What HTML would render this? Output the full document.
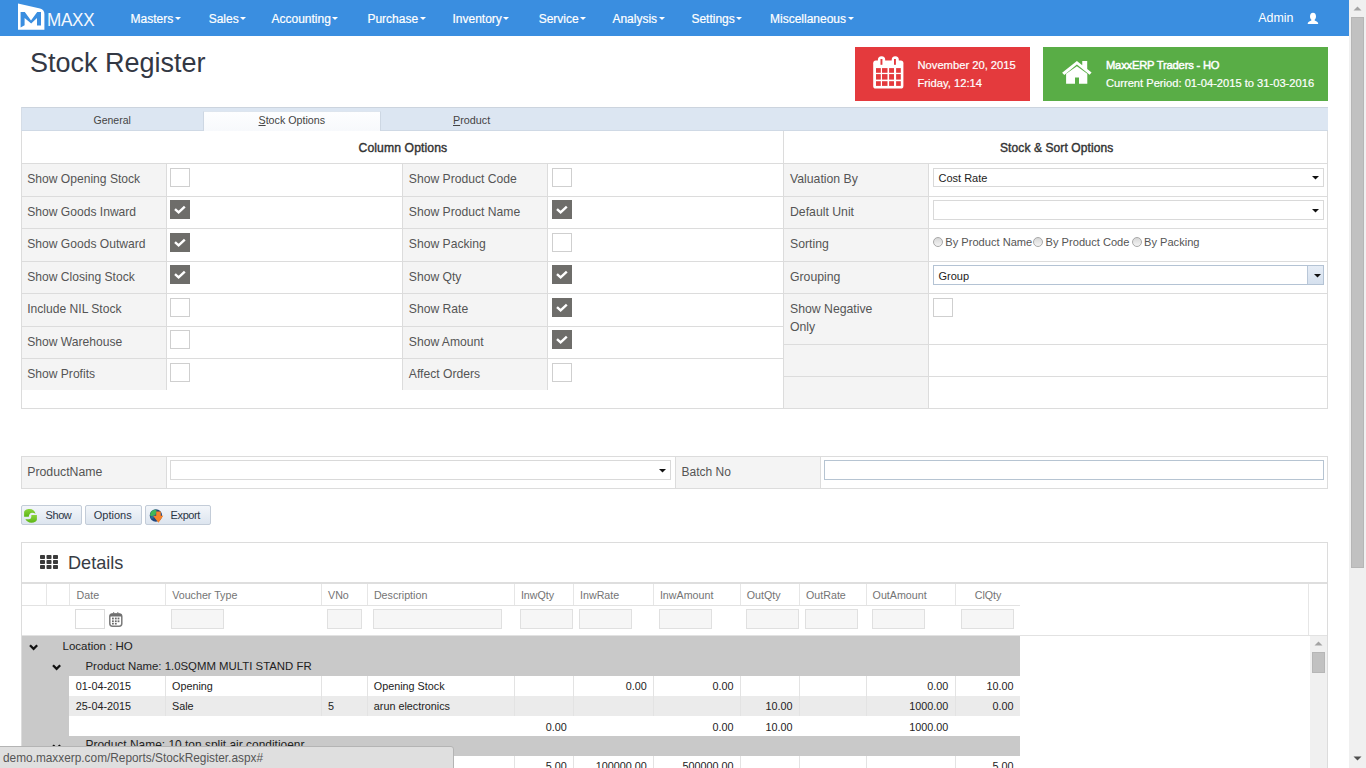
<!DOCTYPE html>
<html><head><meta charset="utf-8"><title>Stock Register</title>
<style>
html,body{margin:0;padding:0;width:1366px;height:768px;overflow:hidden;background:#fff;font-family:"Liberation Sans", sans-serif;}
.a{position:absolute;}
.t{position:absolute;line-height:1;white-space:nowrap;}
.menu .caret{display:inline-block;width:0;height:0;margin-left:1.5px;vertical-align:2.5px;border-left:3.5px solid transparent;border-right:3.5px solid transparent;border-top:3.5px solid #fff;}
.btn{box-sizing:border-box;border:1px solid #c3ccd8;border-radius:2px;background:linear-gradient(#f3f6fa,#dde5ef);}
u{text-decoration:underline;text-underline-offset:1px;}
</style></head><body>
<div class="a" style="left:0px;top:0px;width:1349px;height:36px;background:#3a8ee0;"></div>
<svg class="a" style="left:17px;top:3px" width="29" height="28" viewBox="0 0 29 28">
<path d="M1 0.4 L23 5.6 Q27.4 6.8 27.4 11 L27.4 26.7 L1 26.7 Z" fill="#fff"/>
<path d="M3.6 8.9 L7.8 8.9 L14 17.5 L20.2 8.9 L24 8.9 L24 22.4 L20 22.4 L20 15 L14.2 20.6 L7.6 15 L7.6 22.2 L3.6 24.4 Z" fill="#3a8ee0"/>
</svg>
<div class="t" style="left:46.6px;top:10.56px;font-size:18px;color:#f4f8fd;transform:scaleX(0.95);transform-origin:0 0;letter-spacing:-0.3px;">MAXX</div>
<!--MENU-->
<div class="t menu" style="left:130.5px;top:12.74px;font-size:12px;color:#fff;-webkit-text-stroke:0.2px #fff;">Masters<span class="caret"></span></div>
<div class="t menu" style="left:208.7px;top:12.74px;font-size:12px;color:#fff;-webkit-text-stroke:0.2px #fff;">Sales<span class="caret"></span></div>
<div class="t menu" style="left:271.5px;top:12.74px;font-size:12px;color:#fff;-webkit-text-stroke:0.2px #fff;">Accounting<span class="caret"></span></div>
<div class="t menu" style="left:367.4px;top:12.74px;font-size:12px;color:#fff;-webkit-text-stroke:0.2px #fff;">Purchase<span class="caret"></span></div>
<div class="t menu" style="left:452.5px;top:12.74px;font-size:12px;color:#fff;-webkit-text-stroke:0.2px #fff;">Inventory<span class="caret"></span></div>
<div class="t menu" style="left:538.7px;top:12.74px;font-size:12px;color:#fff;-webkit-text-stroke:0.2px #fff;">Service<span class="caret"></span></div>
<div class="t menu" style="left:612.4px;top:12.74px;font-size:12px;color:#fff;-webkit-text-stroke:0.2px #fff;">Analysis<span class="caret"></span></div>
<div class="t menu" style="left:691.4px;top:12.74px;font-size:12px;color:#fff;-webkit-text-stroke:0.2px #fff;">Settings<span class="caret"></span></div>
<div class="t menu" style="left:770px;top:12.74px;font-size:12px;color:#fff;-webkit-text-stroke:0.2px #fff;">Miscellaneous<span class="caret"></span></div>
<div class="t" style="left:1258.3px;top:12.00px;font-size:12.4px;color:#fff;">Admin</div>
<svg class="a" style="left:1307px;top:12px" width="12" height="13" viewBox="0 0 12 13">
<path d="M6 0.8 C8 0.8 9 2.4 9 4.4 C9 6 8.3 7.2 7.6 7.8 L7.7 8.6 C10.2 9.4 11.2 10.4 11.2 11.9 L0.7 11.9 C0.7 10.4 1.8 9.4 4.3 8.6 L4.4 7.8 C3.7 7.2 3 6 3 4.4 C3 2.4 4 0.8 6 0.8 Z" fill="#fff"/>
</svg>
<div class="a" style="left:1349px;top:0px;width:17px;height:768px;background:#f0f0f0;"></div>
<div class="a" style="left:1351px;top:17px;width:13px;height:551px;background:#c1c1c1;box-sizing:border-box;border:1px solid #b6b6b6;"></div>
<svg class="a" style="left:1353px;top:6px" width="9" height="5"><path d="M0.5 4.5 L4.5 0.5 L8.5 4.5 Z" fill="#a3a3a3"/></svg>
<svg class="a" style="left:1353px;top:756px" width="9" height="5"><path d="M0.5 0.5 L4.5 4.5 L8.5 0.5 Z" fill="#505050"/></svg>
<div class="t" style="left:30px;top:49.74px;font-size:27px;color:#333844;">Stock Register</div>
<div class="a" style="left:855px;top:47px;width:175px;height:54px;background:#e43a3d;"></div>
<svg class="a" style="left:872px;top:55px" width="33" height="35" viewBox="0 0 33 35">
<rect x="1.2" y="5.6" width="30.2" height="27.9" rx="2.6" fill="#fff"/>
<rect x="5.9" y="1.2" width="7.3" height="8" rx="3.6" fill="#fff"/>
<rect x="19.7" y="1.2" width="7.1" height="8" rx="3.5" fill="#fff"/>
<rect x="8.5" y="4" width="1.9" height="5.8" fill="#e43a3d"/>
<rect x="22" y="4" width="1.9" height="5.8" fill="#e43a3d"/>
<g fill="#e43a3d">
<rect x="4" y="13.1" width="4.8" height="4.7"/><rect x="10" y="13.1" width="5.5" height="4.7"/><rect x="17.1" y="13.1" width="4.9" height="4.7"/><rect x="24.1" y="13.1" width="4.7" height="4.7"/>
<rect x="4" y="19.1" width="4.8" height="5.5"/><rect x="10" y="19.1" width="5.5" height="5.5"/><rect x="17.1" y="19.1" width="4.9" height="5.5"/><rect x="24.1" y="19.1" width="4.7" height="5.5"/>
<rect x="4" y="26.2" width="4.8" height="4.7"/><rect x="10" y="26.2" width="5.5" height="4.7"/><rect x="17.1" y="26.2" width="4.9" height="4.7"/><rect x="24.1" y="26.2" width="4.7" height="4.7"/>
</g></svg>
<div class="t" style="left:917.5px;top:60.12px;font-size:11.2px;color:#fff;-webkit-text-stroke:0.2px #fff;">November 20, 2015</div>
<div class="t" style="left:917.5px;top:78.42px;font-size:11.2px;color:#fff;-webkit-text-stroke:0.2px #fff;">Friday, 12:14</div>
<div class="a" style="left:1043px;top:47px;width:285px;height:54px;background:#59ad46;"></div>
<svg class="a" style="left:1061px;top:60px" width="32" height="25" viewBox="0 0 32 25">
<path d="M1.1 12.75 L15.9 1 L21.25 5.2 L21.25 1 L26.2 1 L26.2 9.1 L30.6 12.6 L28.6 14.8 L15.9 4.6 L3.3 14.9 Z" fill="#fff"/>
<path d="M5.1 13.7 L15.9 6.2 L26.3 13.7 L26.3 23.8 L18 23.8 L18 17.4 L14 17.4 L14 23.8 L5.1 23.8 Z" fill="#fff"/>
</svg>
<div class="t" style="left:1106px;top:60.42px;font-size:11.2px;color:#fff;-webkit-text-stroke:0.45px #fff;letter-spacing:-0.2px;">MaxxERP Traders - HO</div>
<div class="t" style="left:1106px;top:78.16px;font-size:11.15px;color:#fff;-webkit-text-stroke:0.2px #fff;">Current Period: 01-04-2015 to 31-03-2016</div>
<div class="a" style="left:21px;top:107px;width:1307px;height:24px;background:#dce6f2;box-sizing:border-box;border-top:1px solid #ccd4de;border-bottom:1px solid #cfd9e5;border-left:1px solid #d5dde7;"></div>
<div class="a" style="left:203px;top:111px;width:178px;height:20px;background:linear-gradient(#fdfeff,#f7f9fc);box-sizing:border-box;border:1px solid #cdd7e3;border-bottom:none;border-top-color:#dde5ee;"></div>
<div class="t" style="left:93.5px;top:115.31px;font-size:10.5px;color:#444;">General</div>
<div class="t" style="left:258.5px;top:115.14px;font-size:10.7px;color:#444;"><u>S</u>tock Options</div>
<div class="t" style="left:453px;top:115.06px;font-size:10.8px;color:#444;"><u>P</u>roduct</div>
<div class="a" style="left:21px;top:131px;width:1px;height:278px;background:#dcdcdc;"></div>
<div class="a" style="left:1327px;top:131px;width:1px;height:278px;background:#dcdcdc;"></div>
<div class="a" style="left:21px;top:408px;width:1307px;height:1px;background:#dcdcdc;"></div>
<div class="a" style="left:783px;top:131px;width:1px;height:278px;background:#dcdcdc;"></div>
<div class="t" style="left:358.5px;top:141.97px;font-size:12.2px;color:#333;-webkit-text-stroke:0.4px #333;letter-spacing:0.1px;">Column Options</div>
<div class="t" style="left:1000px;top:141.64px;font-size:12px;color:#333;-webkit-text-stroke:0.4px #333;letter-spacing:0.1px;">Stock &amp; Sort Options</div>
<div class="a" style="left:22px;top:163px;width:144px;height:227px;background:#f4f4f4;"></div>
<div class="a" style="left:402px;top:163px;width:145px;height:227px;background:#f4f4f4;"></div>
<div class="a" style="left:21px;top:163px;width:762px;height:1px;background:#dcdcdc;"></div>
<div class="a" style="left:21px;top:196px;width:762px;height:1px;background:#dcdcdc;"></div>
<div class="a" style="left:21px;top:228px;width:762px;height:1px;background:#dcdcdc;"></div>
<div class="a" style="left:21px;top:261px;width:762px;height:1px;background:#dcdcdc;"></div>
<div class="a" style="left:21px;top:293px;width:762px;height:1px;background:#dcdcdc;"></div>
<div class="a" style="left:21px;top:326px;width:762px;height:1px;background:#dcdcdc;"></div>
<div class="a" style="left:21px;top:358px;width:762px;height:1px;background:#dcdcdc;"></div>
<div class="a" style="left:166px;top:163px;width:1px;height:227px;background:#dcdcdc;"></div>
<div class="a" style="left:402px;top:163px;width:1px;height:227px;background:#dcdcdc;"></div>
<div class="a" style="left:547px;top:163px;width:1px;height:227px;background:#dcdcdc;"></div>
<div class="t" style="left:27.2px;top:172.96px;font-size:12.1px;color:#555;">Show Opening Stock</div>
<div class="a" style="left:170px;top:168px;width:20px;height:19px;box-sizing:border-box;border:1px solid #cfcfcf;background:#fff"></div>
<div class="t" style="left:408.8px;top:172.92px;font-size:12.15px;color:#555;">Show Product Code</div>
<div class="a" style="left:552px;top:168px;width:20px;height:19px;box-sizing:border-box;border:1px solid #cfcfcf;background:#fff"></div>
<div class="t" style="left:27.2px;top:205.96px;font-size:12.1px;color:#555;">Show Goods Inward</div>
<svg class="a" style="left:170px;top:200px" width="20" height="19" viewBox="0 0 20 19"><rect x="0" y="0" width="20" height="19" fill="#6e6d6a"/><path d="M5 9.2 L8.6 12.4 L14.8 6.6" stroke="#fff" stroke-width="2.4" fill="none"/></svg>
<div class="t" style="left:408.8px;top:205.92px;font-size:12.15px;color:#555;">Show Product Name</div>
<svg class="a" style="left:552px;top:200px" width="20" height="19" viewBox="0 0 20 19"><rect x="0" y="0" width="20" height="19" fill="#6e6d6a"/><path d="M5 9.2 L8.6 12.4 L14.8 6.6" stroke="#fff" stroke-width="2.4" fill="none"/></svg>
<div class="t" style="left:27.2px;top:237.96px;font-size:12.1px;color:#555;">Show Goods Outward</div>
<svg class="a" style="left:170px;top:233px" width="20" height="19" viewBox="0 0 20 19"><rect x="0" y="0" width="20" height="19" fill="#6e6d6a"/><path d="M5 9.2 L8.6 12.4 L14.8 6.6" stroke="#fff" stroke-width="2.4" fill="none"/></svg>
<div class="t" style="left:408.8px;top:237.92px;font-size:12.15px;color:#555;">Show Packing</div>
<div class="a" style="left:552px;top:233px;width:20px;height:19px;box-sizing:border-box;border:1px solid #cfcfcf;background:#fff"></div>
<div class="t" style="left:27.2px;top:270.96px;font-size:12.1px;color:#555;">Show Closing Stock</div>
<svg class="a" style="left:170px;top:265px" width="20" height="19" viewBox="0 0 20 19"><rect x="0" y="0" width="20" height="19" fill="#6e6d6a"/><path d="M5 9.2 L8.6 12.4 L14.8 6.6" stroke="#fff" stroke-width="2.4" fill="none"/></svg>
<div class="t" style="left:408.8px;top:270.92px;font-size:12.15px;color:#555;">Show Qty</div>
<svg class="a" style="left:552px;top:265px" width="20" height="19" viewBox="0 0 20 19"><rect x="0" y="0" width="20" height="19" fill="#6e6d6a"/><path d="M5 9.2 L8.6 12.4 L14.8 6.6" stroke="#fff" stroke-width="2.4" fill="none"/></svg>
<div class="t" style="left:27.2px;top:302.96px;font-size:12.1px;color:#555;">Include NIL Stock</div>
<div class="a" style="left:170px;top:298px;width:20px;height:19px;box-sizing:border-box;border:1px solid #cfcfcf;background:#fff"></div>
<div class="t" style="left:408.8px;top:302.92px;font-size:12.15px;color:#555;">Show Rate</div>
<svg class="a" style="left:552px;top:298px" width="20" height="19" viewBox="0 0 20 19"><rect x="0" y="0" width="20" height="19" fill="#6e6d6a"/><path d="M5 9.2 L8.6 12.4 L14.8 6.6" stroke="#fff" stroke-width="2.4" fill="none"/></svg>
<div class="t" style="left:27.2px;top:335.96px;font-size:12.1px;color:#555;">Show Warehouse</div>
<div class="a" style="left:170px;top:330px;width:20px;height:19px;box-sizing:border-box;border:1px solid #cfcfcf;background:#fff"></div>
<div class="t" style="left:408.8px;top:335.92px;font-size:12.15px;color:#555;">Show Amount</div>
<svg class="a" style="left:552px;top:330px" width="20" height="19" viewBox="0 0 20 19"><rect x="0" y="0" width="20" height="19" fill="#6e6d6a"/><path d="M5 9.2 L8.6 12.4 L14.8 6.6" stroke="#fff" stroke-width="2.4" fill="none"/></svg>
<div class="t" style="left:27.2px;top:367.96px;font-size:12.1px;color:#555;">Show Profits</div>
<div class="a" style="left:170px;top:363px;width:20px;height:19px;box-sizing:border-box;border:1px solid #cfcfcf;background:#fff"></div>
<div class="t" style="left:408.8px;top:367.92px;font-size:12.15px;color:#555;">Affect Orders</div>
<div class="a" style="left:552px;top:363px;width:20px;height:19px;box-sizing:border-box;border:1px solid #cfcfcf;background:#fff"></div>
<div class="a" style="left:784px;top:163px;width:145px;height:245px;background:#f4f4f4;"></div>
<div class="a" style="left:783px;top:163px;width:545px;height:1px;background:#dcdcdc;"></div>
<div class="a" style="left:783px;top:196px;width:545px;height:1px;background:#dcdcdc;"></div>
<div class="a" style="left:783px;top:228px;width:545px;height:1px;background:#dcdcdc;"></div>
<div class="a" style="left:783px;top:261px;width:545px;height:1px;background:#dcdcdc;"></div>
<div class="a" style="left:783px;top:293px;width:545px;height:1px;background:#dcdcdc;"></div>
<div class="a" style="left:783px;top:344px;width:545px;height:1px;background:#dcdcdc;"></div>
<div class="a" style="left:783px;top:376px;width:545px;height:1px;background:#dcdcdc;"></div>
<div class="a" style="left:928px;top:163px;width:1px;height:245px;background:#dcdcdc;"></div>
<div class="t" style="left:790px;top:173.13px;font-size:12.25px;color:#555;">Valuation By</div>
<div class="t" style="left:790px;top:205.93px;font-size:12.25px;color:#555;">Default Unit</div>
<div class="t" style="left:790px;top:238.03px;font-size:12.25px;color:#555;">Sorting</div>
<div class="t" style="left:790px;top:270.63px;font-size:12.25px;color:#555;">Grouping</div>
<div class="t" style="left:790px;top:302.83px;font-size:12.25px;color:#555;">Show Negative</div>
<div class="t" style="left:790px;top:321.23px;font-size:12.25px;color:#555;">Only</div>
<div class="a" style="left:933px;top:168px;width:391px;height:19px;box-sizing:border-box;border:1px solid #d9d9d9;background:#fff"></div>
<div class="t" style="left:938.5px;top:173.49px;font-size:11px;color:#222;">Cost Rate</div>
<svg class="a" style="left:1312px;top:176.3px" width="7" height="4"><path d="M0 0 L7 0 L3.5 3.6 Z" fill="#111"/></svg>
<div class="a" style="left:933px;top:200px;width:391px;height:20px;box-sizing:border-box;border:1px solid #d9d9d9;background:#fff"></div>
<svg class="a" style="left:1312px;top:208.8px" width="7" height="4"><path d="M0 0 L7 0 L3.5 3.6 Z" fill="#111"/></svg>
<div class="a" style="left:933px;top:265px;width:391px;height:20px;box-sizing:border-box;border:1px solid #b4c3d4;background:#fff"></div>
<div class="a" style="left:1307px;top:266px;width:16px;height:18px;background:linear-gradient(#e6edf6,#d5e0ee);border-left:1px solid #b9c7d8;box-sizing:border-box"></div>
<div class="t" style="left:938.5px;top:270.99px;font-size:11px;color:#222;">Group</div>
<svg class="a" style="left:1313.5px;top:273.8px" width="7" height="4"><path d="M0 0 L7 0 L3.5 3.6 Z" fill="#111"/></svg>
<div class="a" style="left:933px;top:236.5px;width:10px;height:10px;border-radius:50%;box-sizing:border-box;border:1px solid #a8a8a8;background:linear-gradient(#d8d8d8,#f4f4f4)"></div>
<div class="t" style="left:945.3px;top:236.50px;font-size:11.1px;color:#555;">By Product Name</div>
<div class="a" style="left:1033px;top:236.5px;width:10px;height:10px;border-radius:50%;box-sizing:border-box;border:1px solid #a8a8a8;background:linear-gradient(#d8d8d8,#f4f4f4)"></div>
<div class="t" style="left:1045.6px;top:236.50px;font-size:11.1px;color:#555;">By Product Code</div>
<div class="a" style="left:1132px;top:236.5px;width:10px;height:10px;border-radius:50%;box-sizing:border-box;border:1px solid #a8a8a8;background:linear-gradient(#d8d8d8,#f4f4f4)"></div>
<div class="t" style="left:1144px;top:236.50px;font-size:11.1px;color:#555;">By Packing</div>
<div class="a" style="left:933px;top:298px;width:20px;height:19px;box-sizing:border-box;border:1px solid #cfcfcf;background:#fff"></div>
<div class="a" style="left:21px;top:456px;width:1307px;height:33px;background:#fff;box-sizing:border-box;border:1px solid #dcdcdc;"></div>
<div class="a" style="left:22px;top:457px;width:144px;height:31px;background:#f4f4f4;"></div>
<div class="a" style="left:166px;top:457px;width:1px;height:31px;background:#dcdcdc;"></div>
<div class="t" style="left:27.2px;top:465.59px;font-size:12.3px;color:#555;">ProductName</div>
<div class="a" style="left:170px;top:460px;width:501px;height:20px;box-sizing:border-box;border:1px solid #d9d9d9;background:#fff"></div>
<svg class="a" style="left:659px;top:468.8px" width="7" height="4"><path d="M0 0 L7 0 L3.5 3.6 Z" fill="#111"/></svg>
<div class="a" style="left:675px;top:457px;width:145px;height:31px;background:#f4f4f4;"></div>
<div class="a" style="left:675px;top:457px;width:1px;height:31px;background:#dcdcdc;"></div>
<div class="a" style="left:820px;top:457px;width:1px;height:31px;background:#dcdcdc;"></div>
<div class="t" style="left:681.5px;top:465.84px;font-size:12px;color:#555;">Batch No</div>
<div class="a" style="left:824px;top:460px;width:500px;height:20px;box-sizing:border-box;border:1px solid #b6c4d2;background:#fff"></div>
<div class="a btn" style="left:21px;top:505px;width:61px;height:20px;"></div>
<div class="t" style="left:45.5px;top:509.69px;font-size:11px;color:#2b3546;letter-spacing:-0.4px;">Show</div>
<div class="a btn" style="left:85px;top:505px;width:57px;height:20px;"></div>
<div class="t" style="left:93.8px;top:509.69px;font-size:11px;color:#2b3546;letter-spacing:0px;">Options</div>
<div class="a btn" style="left:145px;top:505px;width:66px;height:20px;"></div>
<div class="t" style="left:170.6px;top:509.69px;font-size:11px;color:#2b3546;letter-spacing:-0.4px;">Export</div>
<svg class="a" style="left:21px;top:506px" width="20" height="20" viewBox="0 0 20 20">
<defs><linearGradient id="gg" x1="0" y1="0" x2="0" y2="1"><stop offset="0" stop-color="#8ad43c"/><stop offset="1" stop-color="#5db617"/></linearGradient></defs>
<path d="M3.1 10.7 L3.1 6.5 C3.1 4.5 5.5 3.1 8.5 3.1 C11.5 3.1 13.8 5 14.6 7.8 C12.5 6.6 10.2 6.4 9.1 7.4 C8.2 8.4 7.8 9.5 7.8 10.7 Z" fill="url(#gg)"/>
<path d="M15.9 9.1 L15.9 13.5 C15.9 15.5 13.5 16.7 10.5 16.7 C7.5 16.7 5.2 15 4.4 13 C6.5 13.4 8.9 13.6 9.8 12.6 C10.3 11.6 10.4 10.5 10.4 9.1 Z" fill="url(#gg)"/>
</svg>
<svg class="a" style="left:146px;top:506px" width="20" height="20" viewBox="0 0 20 20">
<circle cx="9.9" cy="9.5" r="6.2" fill="#23477e"/>
<path d="M4.1 8.6 Q4.8 4.4 9.2 3.4 L10.6 4.6 L9.6 8.8 L6.5 10.2 L4.2 9.8 Z" fill="#3fb65a"/>
<path d="M4.3 10.4 L8 9.6 L7.6 12.4 L5.2 12.8 Z" fill="#2d6f9a"/>
<path d="M10.2 5.6 L14.8 5.6 L14.8 9.8 L17.3 9.8 L12.5 16.8 L7 9.8 L10.2 9.8 Z" fill="#f6832b"/>
</svg>
<div class="a" style="left:21px;top:542px;width:1307px;height:258px;background:#fff;box-sizing:border-box;border:1px solid #dcdcdc;"></div>
<div class="a" style="left:22px;top:582px;width:1305px;height:2px;background:#dedede;"></div>
<svg class="a" style="left:40px;top:555px" width="18" height="14" viewBox="0 0 18 14"><g fill="#3a3a3a"><rect x="0" y="0" width="5" height="4" rx="0.8"/><rect x="6.5" y="0" width="5" height="4" rx="0.8"/><rect x="13" y="0" width="5" height="4" rx="0.8"/><rect x="0" y="5" width="5" height="4" rx="0.8"/><rect x="6.5" y="5" width="5" height="4" rx="0.8"/><rect x="13" y="5" width="5" height="4" rx="0.8"/><rect x="0" y="10" width="5" height="4" rx="0.8"/><rect x="6.5" y="10" width="5" height="4" rx="0.8"/><rect x="13" y="10" width="5" height="4" rx="0.8"/></g></svg>
<div class="t" style="left:68px;top:553.98px;font-size:18.1px;color:#383c44;">Details</div>
<div class="a" style="left:22px;top:605px;width:998px;height:1px;background:#e2e2e2;"></div>
<div class="a" style="left:46px;top:584px;width:1px;height:21px;background:#e6e6e6;"></div>
<div class="a" style="left:69px;top:584px;width:1px;height:21px;background:#e6e6e6;"></div>
<div class="a" style="left:165px;top:584px;width:1px;height:21px;background:#e6e6e6;"></div>
<div class="a" style="left:321px;top:584px;width:1px;height:21px;background:#e6e6e6;"></div>
<div class="a" style="left:367px;top:584px;width:1px;height:21px;background:#e6e6e6;"></div>
<div class="a" style="left:514px;top:584px;width:1px;height:21px;background:#e6e6e6;"></div>
<div class="a" style="left:573px;top:584px;width:1px;height:21px;background:#e6e6e6;"></div>
<div class="a" style="left:653px;top:584px;width:1px;height:21px;background:#e6e6e6;"></div>
<div class="a" style="left:740px;top:584px;width:1px;height:21px;background:#e6e6e6;"></div>
<div class="a" style="left:799px;top:584px;width:1px;height:21px;background:#e6e6e6;"></div>
<div class="a" style="left:866px;top:584px;width:1px;height:21px;background:#e6e6e6;"></div>
<div class="a" style="left:955px;top:584px;width:1px;height:21px;background:#e6e6e6;"></div>
<div class="a" style="left:1308px;top:584px;width:1px;height:51px;background:#e6e6e6;"></div>
<div class="a" style="left:22px;top:635px;width:1305px;height:1px;background:#e2e2e2;"></div>
<div class="t" style="left:76.5px;top:590.44px;font-size:10.7px;color:#747474;">Date</div>
<div class="t" style="left:172.2px;top:590.44px;font-size:10.7px;color:#747474;">Voucher Type</div>
<div class="t" style="left:328px;top:590.44px;font-size:10.7px;color:#747474;">VNo</div>
<div class="t" style="left:373.9px;top:590.44px;font-size:10.7px;color:#747474;">Description</div>
<div class="t" style="left:520.9px;top:590.44px;font-size:10.7px;color:#747474;">InwQty</div>
<div class="t" style="left:580px;top:590.44px;font-size:10.7px;color:#747474;">InwRate</div>
<div class="t" style="left:659.9px;top:590.44px;font-size:10.7px;color:#747474;">InwAmount</div>
<div class="t" style="left:746.7px;top:590.44px;font-size:10.7px;color:#747474;">OutQty</div>
<div class="t" style="left:806px;top:590.44px;font-size:10.7px;color:#747474;">OutRate</div>
<div class="t" style="left:872.6px;top:590.44px;font-size:10.7px;color:#747474;">OutAmount</div>
<div class="t" style="left:974.7px;top:590.44px;font-size:10.7px;color:#747474;">ClQty</div>
<div class="a" style="left:75px;top:609px;width:30px;height:20px;background:#fff;box-sizing:border-box;border:1px solid #dcdcdc;"></div>
<svg class="a" style="left:108px;top:611px" width="15" height="17" viewBox="0 0 15 17">
<rect x="1.8" y="2.9" width="12" height="12.3" rx="2.6" fill="#fff" stroke="#7a7a7a" stroke-width="1.5"/>
<path d="M1.8 5.6 L1.8 5 Q1.8 2.4 4.4 2.4 L11.2 2.4 Q13.8 2.4 13.8 5 L13.8 5.6 Z" fill="#6f6f6f"/>
<rect x="5" y="1.2" width="1.2" height="2" fill="#7a7a7a"/><rect x="9.2" y="1.2" width="1.2" height="2" fill="#7a7a7a"/>
<g fill="#6a6a6a"><rect x="4" y="6.6" width="1.8" height="1.8"/><rect x="6.9" y="6.6" width="1.8" height="1.8"/><rect x="9.6" y="6.6" width="1.8" height="1.8"/>
<rect x="4" y="9.4" width="1.8" height="1.8"/><rect x="6.9" y="9.4" width="1.8" height="1.8"/><rect x="9.6" y="9.4" width="1.8" height="1.8"/>
<rect x="4" y="12" width="1.8" height="1.5"/><rect x="6.9" y="12" width="1.8" height="1.5"/></g>
</svg>
<div class="a" style="left:171px;top:609px;width:53px;height:20px;background:#f6f6f6;box-sizing:border-box;border:1px solid #e0e0e0;"></div>
<div class="a" style="left:327px;top:609px;width:35px;height:20px;background:#f6f6f6;box-sizing:border-box;border:1px solid #e0e0e0;"></div>
<div class="a" style="left:373px;top:609px;width:129px;height:20px;background:#f6f6f6;box-sizing:border-box;border:1px solid #e0e0e0;"></div>
<div class="a" style="left:520px;top:609px;width:53px;height:20px;background:#f6f6f6;box-sizing:border-box;border:1px solid #e0e0e0;"></div>
<div class="a" style="left:579px;top:609px;width:53px;height:20px;background:#f6f6f6;box-sizing:border-box;border:1px solid #e0e0e0;"></div>
<div class="a" style="left:659px;top:609px;width:53px;height:20px;background:#f6f6f6;box-sizing:border-box;border:1px solid #e0e0e0;"></div>
<div class="a" style="left:746px;top:609px;width:53px;height:20px;background:#f6f6f6;box-sizing:border-box;border:1px solid #e0e0e0;"></div>
<div class="a" style="left:805px;top:609px;width:53px;height:20px;background:#f6f6f6;box-sizing:border-box;border:1px solid #e0e0e0;"></div>
<div class="a" style="left:872px;top:609px;width:53px;height:20px;background:#f6f6f6;box-sizing:border-box;border:1px solid #e0e0e0;"></div>
<div class="a" style="left:961px;top:609px;width:53px;height:20px;background:#f6f6f6;box-sizing:border-box;border:1px solid #e0e0e0;"></div>
<div class="a" style="left:22px;top:636px;width:998px;height:132px;background:#c9c9c9;"></div>
<svg class="a" style="left:28.8px;top:644px" width="9" height="7"><path d="M1 1.2 L4.6 4.8 L8.2 1.2" stroke="#111" stroke-width="2.3" fill="none"/></svg>
<div class="t" style="left:62.5px;top:640.77px;font-size:11.5px;color:#222;">Location : HO</div>
<svg class="a" style="left:51.9px;top:664px" width="9" height="7"><path d="M1 1.2 L4.6 4.8 L8.2 1.2" stroke="#111" stroke-width="2.3" fill="none"/></svg>
<div class="t" style="left:85.5px;top:660.95px;font-size:11.4px;color:#222;">Product Name: 1.0SQMM MULTI STAND FR</div>
<div class="a" style="left:69px;top:676px;width:951px;height:20px;background:#fff;"></div>
<div class="a" style="left:69px;top:696px;width:951px;height:20px;background:#ebebeb;"></div>
<div class="a" style="left:69px;top:716px;width:951px;height:20px;background:#fff;"></div>
<svg class="a" style="left:51.9px;top:744px" width="9" height="7"><path d="M1 1.2 L4.6 4.8 L8.2 1.2" stroke="#111" stroke-width="2.3" fill="none"/></svg>
<div class="t" style="left:85.5px;top:740.48px;font-size:11.95px;color:#222;">Product Name: 10 ton split air conditioenr</div>
<div class="a" style="left:69px;top:756px;width:951px;height:20px;background:#fff;"></div>
<div class="a" style="left:165px;top:676px;width:1px;height:40px;background:#e3e3e3;"></div>
<div class="a" style="left:165px;top:756px;width:1px;height:20px;background:#e3e3e3;"></div>
<div class="a" style="left:321px;top:676px;width:1px;height:40px;background:#e3e3e3;"></div>
<div class="a" style="left:321px;top:756px;width:1px;height:20px;background:#e3e3e3;"></div>
<div class="a" style="left:367px;top:676px;width:1px;height:40px;background:#e3e3e3;"></div>
<div class="a" style="left:367px;top:756px;width:1px;height:20px;background:#e3e3e3;"></div>
<div class="a" style="left:514px;top:676px;width:1px;height:40px;background:#e3e3e3;"></div>
<div class="a" style="left:514px;top:756px;width:1px;height:20px;background:#e3e3e3;"></div>
<div class="a" style="left:573px;top:676px;width:1px;height:40px;background:#e3e3e3;"></div>
<div class="a" style="left:573px;top:756px;width:1px;height:20px;background:#e3e3e3;"></div>
<div class="a" style="left:653px;top:676px;width:1px;height:40px;background:#e3e3e3;"></div>
<div class="a" style="left:653px;top:756px;width:1px;height:20px;background:#e3e3e3;"></div>
<div class="a" style="left:740px;top:676px;width:1px;height:40px;background:#e3e3e3;"></div>
<div class="a" style="left:740px;top:756px;width:1px;height:20px;background:#e3e3e3;"></div>
<div class="a" style="left:799px;top:676px;width:1px;height:40px;background:#e3e3e3;"></div>
<div class="a" style="left:799px;top:756px;width:1px;height:20px;background:#e3e3e3;"></div>
<div class="a" style="left:866px;top:676px;width:1px;height:40px;background:#e3e3e3;"></div>
<div class="a" style="left:866px;top:756px;width:1px;height:20px;background:#e3e3e3;"></div>
<div class="a" style="left:955px;top:676px;width:1px;height:40px;background:#e3e3e3;"></div>
<div class="a" style="left:955px;top:756px;width:1px;height:20px;background:#e3e3e3;"></div>
<div class="t" style="left:75.8px;top:680.76px;font-size:10.8px;color:#222;">01-04-2015</div>
<div class="t" style="left:172px;top:680.76px;font-size:10.8px;color:#222;">Opening</div>
<div class="t" style="left:373.8px;top:680.76px;font-size:10.8px;color:#222;">Opening Stock</div>
<div class="t" style="right:719.3px;top:680.76px;font-size:10.8px;color:#222;text-align:right;">0.00</div>
<div class="t" style="right:632.4px;top:680.76px;font-size:10.8px;color:#222;text-align:right;">0.00</div>
<div class="t" style="right:417.79999999999995px;top:680.76px;font-size:10.8px;color:#222;text-align:right;">0.00</div>
<div class="t" style="right:352.6px;top:680.76px;font-size:10.8px;color:#222;text-align:right;">10.00</div>
<div class="t" style="left:75.8px;top:701.06px;font-size:10.8px;color:#222;">25-04-2015</div>
<div class="t" style="left:172px;top:701.06px;font-size:10.8px;color:#222;">Sale</div>
<div class="t" style="left:328px;top:701.06px;font-size:10.8px;color:#222;">5</div>
<div class="t" style="left:373.8px;top:701.06px;font-size:10.8px;color:#222;">arun electronics</div>
<div class="t" style="right:573.4px;top:701.06px;font-size:10.8px;color:#222;text-align:right;">10.00</div>
<div class="t" style="right:417.79999999999995px;top:701.06px;font-size:10.8px;color:#222;text-align:right;">1000.00</div>
<div class="t" style="right:352.6px;top:701.06px;font-size:10.8px;color:#222;text-align:right;">0.00</div>
<div class="t" style="right:799.3px;top:721.76px;font-size:10.8px;color:#222;text-align:right;">0.00</div>
<div class="t" style="right:632.4px;top:721.76px;font-size:10.8px;color:#222;text-align:right;">0.00</div>
<div class="t" style="right:573.4px;top:721.76px;font-size:10.8px;color:#222;text-align:right;">10.00</div>
<div class="t" style="right:417.79999999999995px;top:721.76px;font-size:10.8px;color:#222;text-align:right;">1000.00</div>
<div class="t" style="right:799.3px;top:761.36px;font-size:10.8px;color:#222;text-align:right;">5.00</div>
<div class="t" style="right:719.3px;top:761.36px;font-size:10.8px;color:#222;text-align:right;">100000.00</div>
<div class="t" style="right:632.4px;top:761.36px;font-size:10.8px;color:#222;text-align:right;">500000.00</div>
<div class="t" style="right:352.6px;top:761.36px;font-size:10.8px;color:#222;text-align:right;">5.00</div>
<div class="a" style="left:1310px;top:636px;width:17px;height:132px;background:#f0f0f0;"></div>
<svg class="a" style="left:1314px;top:641px" width="9" height="5"><path d="M0.5 4.5 L4.5 0.5 L8.5 4.5 Z" fill="#a3a3a3"/></svg>
<div class="a" style="left:1312px;top:652px;width:13px;height:21px;background:#c1c1c1;box-sizing:border-box;border:1px solid #b6b6b6;"></div>
<div class="a" style="left:-2px;top:746px;width:456px;height:30px;background:#dfdfdf;box-sizing:border-box;border:1px solid #b4b4b4;border-top-right-radius:3px"></div>
<div class="t" style="left:3px;top:753.17px;font-size:11.85px;color:#555;">demo.maxxerp.com/Reports/StockRegister.aspx#</div>
</body></html>
